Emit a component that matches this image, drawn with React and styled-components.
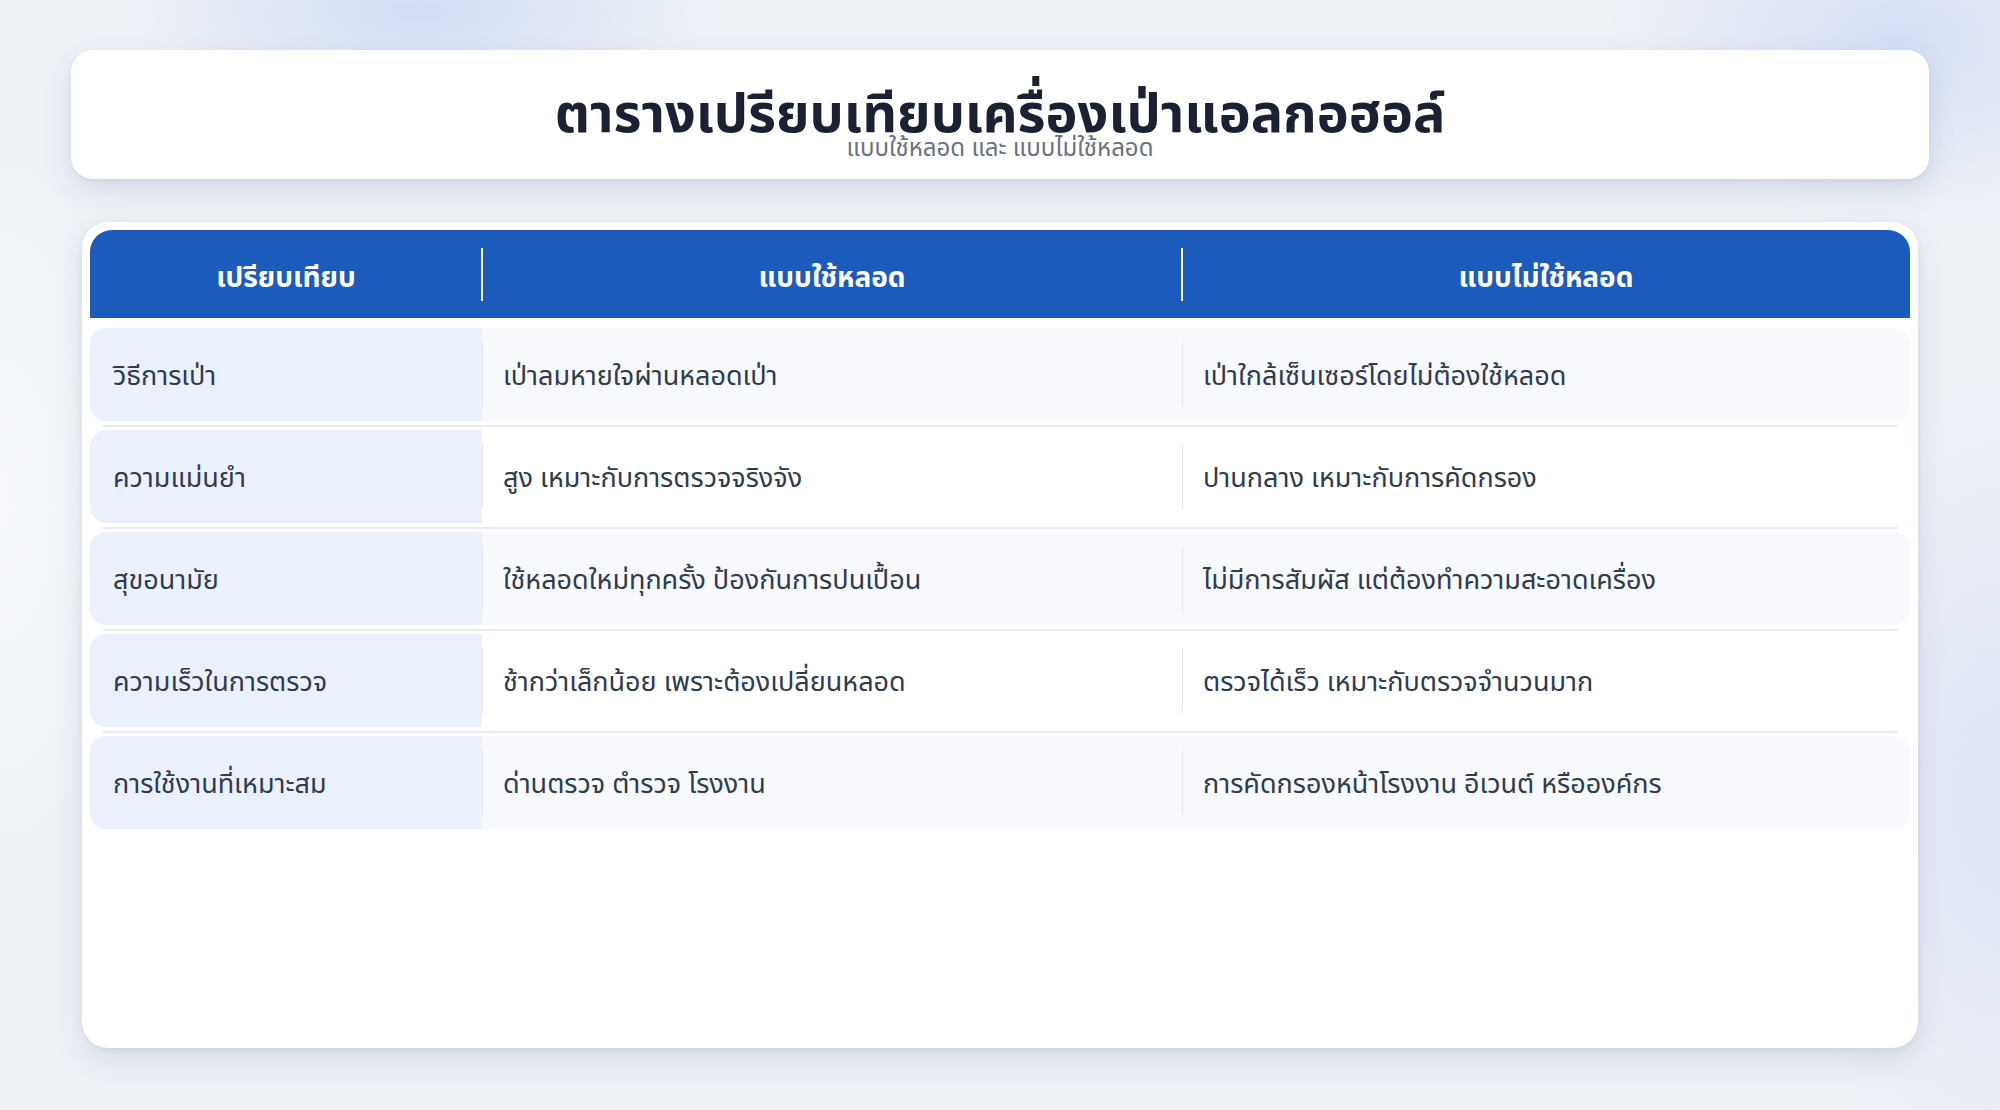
import React from 'react';
import styled, { createGlobalStyle } from 'styled-components';

const COLS = '392px 700px 1fr';

const GlobalStyle = createGlobalStyle`
  html, body {
    margin: 0;
    padding: 0;
  }
  body {
    font-family: "Noto Sans Thai", "Noto Sans", sans-serif;
    background-color: #eef2f7;
    background-image:
      radial-gradient(ellipse 420px 160px at 420px 10px, rgba(200, 214, 245, 0.75), transparent 70%),
      radial-gradient(ellipse 420px 260px at 1900px 40px, rgba(205, 216, 245, 0.75), transparent 70%),
      radial-gradient(ellipse 300px 600px at 2000px 800px, rgba(215, 223, 245, 0.7), transparent 70%),
      radial-gradient(ellipse 200px 500px at 0px 500px, rgba(248, 250, 252, 0.9), transparent 70%);
  }
`;

const Page = styled.div`
  box-sizing: border-box;
  width: 2000px;
  min-height: 1110px;
  padding: 50px 71px 0;
`;

const TitleCard = styled.header`
  box-sizing: border-box;
  height: 129px;
  padding-top: 36px;
  background: #fff;
  border-radius: 22px;
  box-shadow: 0 10px 28px rgba(40, 60, 110, 0.13), 0 2px 4px rgba(40, 60, 110, 0.06);
  display: flex;
  flex-direction: column;
  align-items: center;
`;

const Title = styled.h1`
  margin: 0;
  font-size: 54px;
  font-weight: 700;
  line-height: 60px;
  color: #1a2132;
`;

const Subtitle = styled.p`
  margin: -10px 0 0;
  font-size: 24px;
  line-height: 26px;
  color: #6b7280;
`;

const TableCard = styled.section`
  box-sizing: border-box;
  height: 826px;
  margin: 43px 11px 0;
  padding: 8px;
  background: #fff;
  border-radius: 26px;
  box-shadow: 0 12px 30px rgba(40, 60, 110, 0.12), 0 2px 6px rgba(40, 60, 110, 0.06);
`;

const HeadRow = styled.div`
  display: grid;
  grid-template-columns: ${COLS};
  height: 88px;
  background: #1a5bbb;
  border-radius: 22px 22px 0 0;
`;

const HeadCell = styled.div`
  position: relative;
  box-sizing: border-box;
  display: flex;
  align-items: center;
  justify-content: center;
  padding-top: 8px;
  color: #fff;
  font-size: 28px;
  font-weight: 700;

  ${({ $divided }) => $divided && `
    &::before {
      content: '';
      position: absolute;
      left: -1px;
      top: 18px;
      bottom: 17px;
      width: 2px;
      background: #fff;
    }
  `}
`;

const Body = styled.div`
  display: flex;
  flex-direction: column;
  margin-top: 10px;
`;

const Row = styled.div`
  display: grid;
  grid-template-columns: ${COLS};
  height: 93px;
  border-radius: 16px;
  background: ${({ $striped }) => ($striped ? '#f7f9fc' : '#fff')};
`;

const RowRule = styled.div`
  height: 2px;
  margin: 4px 12px 3px 13px;
  background: #e8ecf2;
`;

const LabelCell = styled.div`
  box-sizing: border-box;
  display: flex;
  align-items: center;
  padding: 3px 0 0 23px;
  background: #ebf1fc;
  border-radius: 16px 0 0 16px;
  font-size: 27px;
  color: #2f3b4e;
`;

const Cell = styled.div`
  position: relative;
  box-sizing: border-box;
  display: flex;
  align-items: center;
  padding: 3px 0 0 21px;
  font-size: 27px;
  color: #2f3b4e;

  &::before {
    content: '';
    position: absolute;
    left: 0;
    top: 14px;
    bottom: 14px;
    width: 1px;
    background: #e2e7ef;
  }
`;

const rows = [
  ['วิธีการเป่า', 'เป่าลมหายใจผ่านหลอดเป่า', 'เป่าใกล้เซ็นเซอร์โดยไม่ต้องใช้หลอด'],
  ['ความแม่นยำ', 'สูง เหมาะกับการตรวจจริงจัง', 'ปานกลาง เหมาะกับการคัดกรอง'],
  ['สุขอนามัย', 'ใช้หลอดใหม่ทุกครั้ง ป้องกันการปนเปื้อน', 'ไม่มีการสัมผัส แต่ต้องทำความสะอาดเครื่อง'],
  ['ความเร็วในการตรวจ', 'ช้ากว่าเล็กน้อย เพราะต้องเปลี่ยนหลอด', 'ตรวจได้เร็ว เหมาะกับตรวจจำนวนมาก'],
  ['การใช้งานที่เหมาะสม', 'ด่านตรวจ ตำรวจ โรงงาน', 'การคัดกรองหน้าโรงงาน อีเวนต์ หรือองค์กร'],
];

const App = () => {
  return (
    <>
      <GlobalStyle />
      <Page>
        <TitleCard>
          <Title>ตารางเปรียบเทียบเครื่องเป่าแอลกอฮอล์</Title>
          <Subtitle>แบบใช้หลอด และ แบบไม่ใช้หลอด</Subtitle>
        </TitleCard>

        <TableCard>
          <HeadRow>
            <HeadCell>เปรียบเทียบ</HeadCell>
            <HeadCell $divided>แบบใช้หลอด</HeadCell>
            <HeadCell $divided>แบบไม่ใช้หลอด</HeadCell>
          </HeadRow>
          <Body>
            {rows.map(([label, a, b], i) => (
              <React.Fragment key={label}>
                {i > 0 && <RowRule />}
                <Row $striped={i % 2 === 0}>
                  <LabelCell>{label}</LabelCell>
                  <Cell>{a}</Cell>
                  <Cell>{b}</Cell>
                </Row>
              </React.Fragment>
            ))}
          </Body>
        </TableCard>
      </Page>
    </>
  );
};

export default App;
